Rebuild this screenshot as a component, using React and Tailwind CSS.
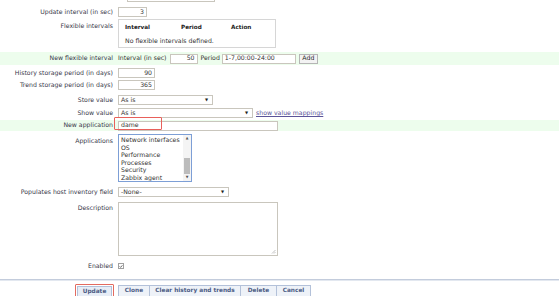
import React from "react";

const Row = ({ label, className = "", labelClass = "", children }) => (
  <div className={"relative flex items-center " + className}>
    <div className={"w-[113px] shrink-0 text-right leading-none text-[#38384a] " + labelClass}>
      {label}
    </div>
    <div className="ml-[5px] flex items-center">{children}</div>
  </div>
);

const Box = ({ className = "", children }) => (
  <div
    className={
      "flex h-[10px] items-center border border-[#c9c6bd] bg-white px-[2px] leading-none " +
      className
    }
  >
    {children}
  </div>
);

const Select = ({ value, className = "" }) => (
  <Box className={"justify-between " + className}>
    <span>{value}</span>
    <span className="pr-[2px] text-[4px] text-[#222]">▼</span>
  </Box>
);

const Check = ({ className = "" }) => (
  <div
    className={
      "flex h-[6px] w-[6px] items-center justify-center border border-[#a0a0a0] bg-white " +
      className
    }
  >
    <svg width="5" height="5" viewBox="0 0 5 5">
      <path d="M0.8 2.4 L2 3.6 L4.2 1" stroke="#333" strokeWidth="0.9" fill="none" />
    </svg>
  </div>
);

const apps = [
  "Network interfaces",
  "OS",
  "Performance",
  "Processes",
  "Security",
  "Zabbix agent",
];

const App = () => {
  return (
    <div className="h-[296px] w-[559px] overflow-hidden bg-white font-['DejaVu_Sans',sans-serif] text-[6.2px] text-[#333]">
      <div className="flex flex-col">
        {/* multiplier row, mostly above the top edge */}
        <Row label="Use custom multiplier" className="-mt-[9px] h-[11px]">
          <div className="h-[6px] w-[6px] border border-[#c0c0c0] bg-[#f4f4f4]" />
          <Box className="ml-[3px] w-[88px] bg-[#f2f2f2]" />
        </Row>

        <Row label="Update interval (in sec)" className="mt-[5px] h-[10px]">
          <Box className="w-[29px] justify-end">3</Box>
        </Row>

        <Row
          label="Flexible intervals"
          className="mt-[2px] !items-start"
          labelClass="pt-[4px]"
        >
          <div className="h-[29px] w-[158px] border border-[#d6d6d6] bg-white">
            <div className="flex pl-[6px] pt-[5px] text-[5.7px] font-bold leading-none text-[#222]">
              <span className="w-[56px]">Interval</span>
              <span className="w-[50px]">Period</span>
              <span>Action</span>
            </div>
            <div className="pl-[6px] pt-[7px] leading-none">
              No flexible intervals defined.
            </div>
          </div>
        </Row>

        <Row label="New flexible interval" className="mt-[4px] h-[13px] bg-[#edfded]">
          <span className="leading-none">Interval (in sec)</span>
          <Box className="ml-[3px] w-[28px] justify-end">50</Box>
          <span className="ml-[3px] leading-none">Period</span>
          <Box className="ml-[2px] w-[74px]">1-7,00:00-24:00</Box>
          <div className="ml-[3px] flex h-[10px] w-[19px] items-center justify-center border border-[#b5b5b5] bg-[#f3f3f3] leading-none text-[#222]">
            Add
          </div>
        </Row>

        <Row label="History storage period (in days)" className="mt-[3px] h-[10px]">
          <Box className="w-[37px] justify-end">90</Box>
        </Row>

        <Row label="Trend storage period (in days)" className="mt-[2px] h-[10px]">
          <Box className="w-[37px] justify-end">365</Box>
        </Row>

        <Row label="Store value" className="mt-[5px] h-[10px]">
          <Select value="As is" className="w-[95px]" />
        </Row>

        <Row label="Show value" className="mt-[3px] h-[10px]">
          <Select value="As is" className="w-[135px]" />
          <a className="ml-[3px] leading-none text-[#5b5499] underline">
            show value mappings
          </a>
        </Row>

        <Row label="New application" className="mt-[2px] h-[11px] bg-[#edfded]">
          <Box className="w-[160px]">dame</Box>
          <div className="absolute left-[114px] top-[-3px] h-[13px] w-[48px] rounded-[1px] border border-[#e8605a]" />
        </Row>

        <Row label="Applications" className="mt-[3px] !items-start" labelClass="pt-[4px]">
          <div className="flex h-[48px] w-[74px] overflow-hidden border border-[#7d9fd6] bg-white">
            <div className="flex-1 pl-[2px] pt-[1px] leading-[7.6px]">
              {apps.map((a) => (
                <div key={a} className="whitespace-nowrap">
                  {a}
                </div>
              ))}
            </div>
            <div className="flex w-[8px] flex-col items-center bg-[#f4f4f4]">
              <span className="pt-[2px] text-[3.5px] leading-none text-[#555]">▲</span>
              <div className="mt-[17px] h-[16px] w-[6px] bg-[#bcbcbc]" />
              <span className="mt-auto pb-[2px] text-[3.5px] leading-none text-[#555]">▼</span>
            </div>
          </div>
        </Row>

        <Row label="Populates host inventory field" className="mt-[5px] h-[10px]">
          <Select value="-None-" className="w-[111px]" />
        </Row>

        <Row label="Description" className="mt-[5px] !items-start" labelClass="pt-[3px]">
          <div className="relative h-[54px] w-[160px] border border-[#c9c6bd] bg-white">
            <svg
              className="absolute bottom-[1px] right-[1px]"
              width="5"
              height="5"
              viewBox="0 0 5 5"
            >
              <path d="M4.5 1 L1 4.5 M4.5 3 L3 4.5" stroke="#999" strokeWidth="0.6" />
            </svg>
          </div>
        </Row>

        <Row label="Enabled" className="mt-[5px] h-[10px]">
          <Check />
        </Row>

        <div className="mt-[8px] h-[2px] border-t border-b border-t-[#c3ccdc] border-b-[#e3e8f0]" />

        <div className="mt-[3px] flex items-start pl-[75px]">
          <div className="h-[13px] rounded-[1px] border border-[#e36b60] p-[1px]">
            <div className="flex h-[11px] w-[35px] items-center justify-center border border-[#b3c1d9] bg-[#e7edf6] text-[5.8px] font-bold leading-none text-[#4b5b84]">
              Update
            </div>
          </div>
          <div className="ml-[4px] mt-[1px] flex h-[12px] text-[5.8px] font-bold leading-none text-[#4b5b84]">
            <div className="flex w-[32px] items-center justify-center border border-[#b3c1d9] bg-[#eef2f8]">
              Clone
            </div>
            <div className="flex w-[91px] items-center justify-center border border-l-0 border-[#b3c1d9] bg-[#eef2f8]">
              Clear history and trends
            </div>
            <div className="flex w-[36px] items-center justify-center border border-l-0 border-[#b3c1d9] bg-[#eef2f8]">
              Delete
            </div>
            <div className="flex w-[34px] items-center justify-center border border-l-0 border-[#b3c1d9] bg-[#eef2f8]">
              Cancel
            </div>
          </div>
        </div>
      </div>
    </div>
  );
};

export default App;
